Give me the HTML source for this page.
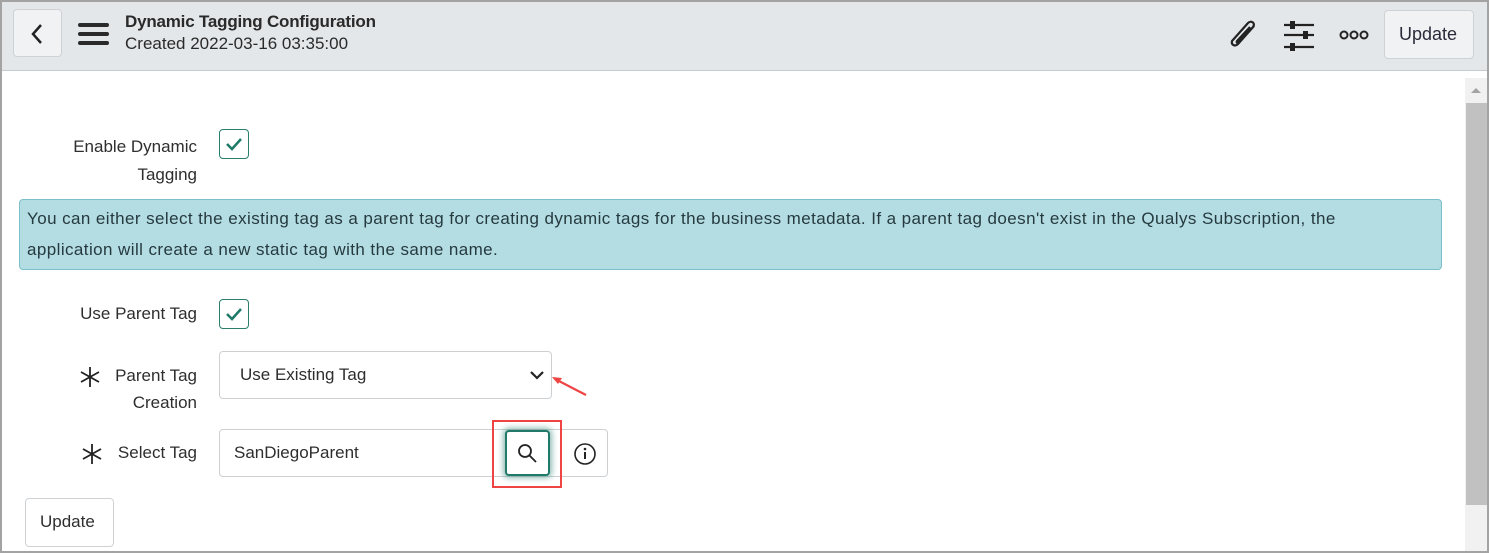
<!DOCTYPE html>
<html><head><style>
*{box-sizing:border-box;margin:0;padding:0}
body{width:1489px;height:553px;overflow:hidden;background:#fff;font-family:"Liberation Sans",sans-serif;color:#2e2e2e;position:relative}
.frame{position:absolute;inset:0;border:2px solid #a3a3a3;border-right-width:2px}
.hdr{position:absolute;left:2px;top:2px;right:2px;height:69px;background:#e4e7ea;border-bottom:1px solid #c8cbce}
.btn{position:absolute;background:#f1f2f3;border:1px solid #cfd2d5;border-radius:4px}
.t{position:absolute;white-space:nowrap}
.lbl{position:absolute;font-size:17px;color:#2e2e2e;text-align:right}
.cb{position:absolute;width:30px;height:30px;border:1px solid #2b7d6e;border-radius:4px;background:#fff}
.input{position:absolute;border:1px solid #cdd0d3;border-radius:4px;background:#fff;font-size:17px}
</style></head><body>
<div class="hdr"></div>
<div class="btn" style="left:13px;top:9px;width:49px;height:48px"></div>
<svg style="position:absolute;left:28px;top:22px" width="20" height="24"><path d="M13 3 L5 12 L13 21" stroke="#222" stroke-width="2.5" fill="none"/></svg>
<svg style="position:absolute;left:78px;top:22px" width="32" height="24"><g stroke="#2a2a2a" stroke-width="4" stroke-linecap="round"><path d="M2 3H29M2 12H29M2 21H29"/></g></svg>
<div class="t" style="left:125px;top:12px;font-size:17px;font-weight:bold;color:#2a2a2a;letter-spacing:-0.2px">Dynamic Tagging Configuration</div>
<div class="t" style="left:125px;top:34px;font-size:17px;color:#2a2a2a">Created 2022-03-16 03:35:00</div>
<svg style="position:absolute;left:1226px;top:18px" width="36" height="34"><path d="M28 8 L12 26 C9 29 5 27 6 23 L22 5 C25 2 30 5 27 9 L13 24 C12 26 10 25 11 23 L24 9" stroke="#222" stroke-width="2.2" fill="none"/></svg>
<svg style="position:absolute;left:1283px;top:20px" width="32" height="32"><g stroke="#222" stroke-width="2.2"><path d="M1 5H31M1 15H31M1 27H31"/></g><g fill="#222"><rect x="7" y="1" width="5" height="8"/><rect x="20" y="11" width="5" height="8"/><rect x="7" y="23" width="5" height="8"/></g></svg>
<svg style="position:absolute;left:1338px;top:29px" width="34" height="12"><g stroke="#222" stroke-width="2" fill="none"><circle cx="6" cy="6" r="3.5"/><circle cx="16" cy="6" r="3.5"/><circle cx="26" cy="6" r="3.5"/></g></svg>
<div class="btn" style="left:1384px;top:10px;width:90px;height:49px"></div>
<div class="t" style="left:1399px;top:24px;font-size:18px;color:#2a2a3a">Update</div>
<div style="position:absolute;left:1465px;top:78px;width:22px;height:475px;background:#f1f1f1"></div>
<div style="position:absolute;left:1466px;top:103px;width:21px;height:402px;background:#c1c1c1"></div>
<svg style="position:absolute;left:1469px;top:85px" width="14" height="10"><path d="M2 8L7 3L12 8Z" fill="#a3a3a3"/></svg>
<div class="lbl" style="left:40px;top:133px;width:157px;line-height:28px">Enable Dynamic<br>Tagging</div>
<div class="cb" style="left:219px;top:129px"></div>
<svg style="position:absolute;left:224px;top:135px" width="20" height="18"><path d="M3 9L8 14L17 4" stroke="#1f7a69" stroke-width="2.5" fill="none"/></svg>
<div style="position:absolute;left:19px;top:199px;width:1423px;height:71px;background:#b4dde3;border:1px solid #7cbfca;border-radius:4px"></div>
<div class="t" style="left:27px;top:203px;font-size:17px;letter-spacing:0.42px;line-height:31px;color:#253a3f">You can either select the existing tag as a parent tag for creating dynamic tags for the business metadata. If a parent tag doesn't exist in the Qualys Subscription, the<br>application will create a new static tag with the same name.</div>
<div class="lbl" style="left:40px;top:304px;width:157px">Use Parent Tag</div>
<div class="cb" style="left:219px;top:299px"></div>
<svg style="position:absolute;left:224px;top:305px" width="20" height="18"><path d="M3 9L8 14L17 4" stroke="#1f7a69" stroke-width="2.5" fill="none"/></svg>
<div class="lbl" style="left:40px;top:362px;width:157px;line-height:27px">Parent Tag<br>Creation</div>
<svg style="position:absolute;left:79px;top:366px" width="22" height="22"><g stroke="#222" stroke-width="1.8"><path d="M11 1V21M2 6L20 16M2 16L20 6"/></g></svg>
<div class="input" style="left:219px;top:351px;width:333px;height:48px"></div>
<div class="t" style="left:240px;top:365px;font-size:17px">Use Existing Tag</div>
<svg style="position:absolute;left:528px;top:368px" width="18" height="14"><path d="M3 4L9 10L15 4" stroke="#222" stroke-width="2.2" fill="none"/></svg>
<svg style="position:absolute;left:550px;top:372px" width="40" height="26"><path d="M36 23L5 7" stroke="#ef4444" stroke-width="2.2"/><path d="M2 5L12 6L8 12Z" fill="#ef4444"/></svg>
<div class="lbl" style="left:40px;top:443px;width:157px">Select Tag</div>
<svg style="position:absolute;left:81px;top:443px" width="22" height="22"><g stroke="#222" stroke-width="1.8"><path d="M11 1V21M2 6L20 16M2 16L20 6"/></g></svg>
<div class="input" style="left:219px;top:429px;width:389px;height:48px"></div>
<div style="position:absolute;left:560px;top:430px;width:1px;height:46px;background:#cdd0d3"></div>
<div class="t" style="left:234px;top:443px;font-size:17px">SanDiegoParent</div>
<div style="position:absolute;left:505px;top:430px;width:45px;height:46px;border:2.5px solid #217a69;border-radius:4px;box-shadow:0 0 6px 2px rgba(33,122,105,.5);background:#fff"></div>
<svg style="position:absolute;left:516px;top:442px" width="24" height="24"><circle cx="9" cy="9" r="6" stroke="#222" stroke-width="1.8" fill="none"/><path d="M13.5 13.5L20 20" stroke="#222" stroke-width="1.8"/></svg>
<div style="position:absolute;left:492px;top:420px;width:70px;height:68px;border:2.5px solid #ef4444"></div>
<svg style="position:absolute;left:573px;top:442px" width="24" height="24"><circle cx="12" cy="12" r="10" stroke="#222" stroke-width="1.6" fill="none"/><path d="M12 10V17" stroke="#222" stroke-width="2"/><circle cx="12" cy="7" r="1.3" fill="#222"/></svg>
<div class="btn" style="left:25px;top:498px;width:89px;height:49px;background:#fff"></div>
<div class="t" style="left:40px;top:512px;font-size:17px">Update</div>
<div class="frame"></div>
</body></html>
